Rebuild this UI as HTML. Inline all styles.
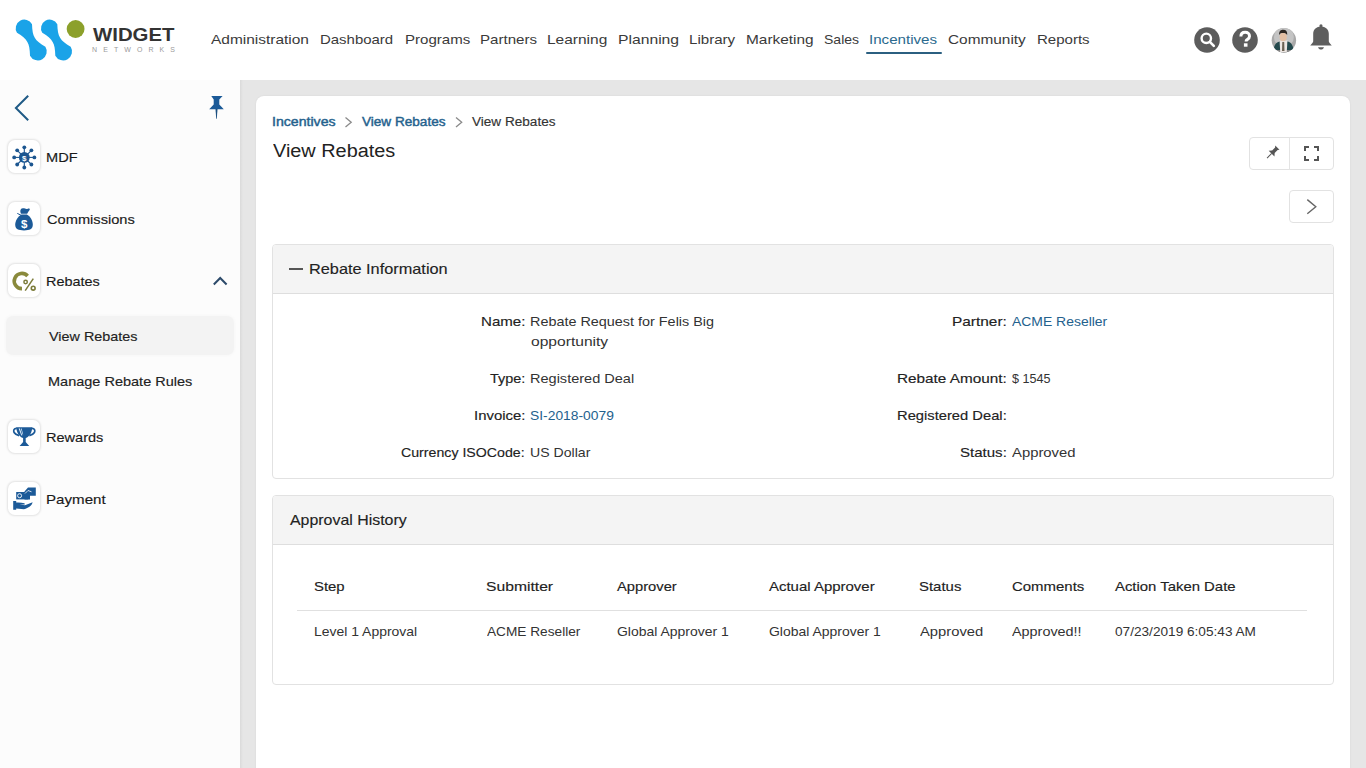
<!DOCTYPE html>
<html><head><meta charset="utf-8">
<style>
*{margin:0;padding:0;box-sizing:border-box}
html,body{width:1366px;height:768px;overflow:hidden;background:#e6e6e6;font-family:"Liberation Sans",sans-serif;color:#222}
.a{position:absolute}
.t{position:absolute;white-space:nowrap}
#hdr{position:absolute;left:0;top:0;width:1366px;height:80px;background:#fff}
#side{position:absolute;left:0;top:80px;width:240px;height:688px;background:#fcfcfc}
#card{position:absolute;left:256px;top:96px;width:1094px;height:700px;background:#fff;border-radius:8px;box-shadow:0 0 2px rgba(0,0,0,0.08)}
.panel{position:absolute;left:272px;width:1062px;border:1px solid #e2e2e2;border-radius:4px;background:#fff;overflow:hidden}
.ph{position:absolute;left:0;top:0;right:0;height:49px;background:#f4f4f4;border-bottom:1px solid #dedede}
.ibox{position:absolute;left:8px;width:32px;height:33px;background:#fff;border-radius:7px;box-shadow:0 0 2px 1px rgba(0,0,0,0.10)}
.btn{position:absolute;border:1px solid #e2e2e2;border-radius:4px;background:#fff}
</style></head><body>
<div id="hdr">
  <svg class="a" style="left:0;top:0" width="200" height="80" viewBox="0 0 200 80">
    <g fill="#1aa3e8">
      <path d="M32.02 24.13 C32.38 36.68 34.66 40.21 45.39 46.73 A8.90 8.90 0 1 1 30.01 55.67 C29.65 43.12 27.71 39.39 16.98 32.87 A8.70 8.70 0 1 1 32.02 24.13 Z"/>
      <path d="M57.32 24.13 C57.68 36.68 59.96 40.21 70.69 46.73 A8.90 8.90 0 1 1 55.31 55.67 C54.95 43.12 53.01 39.39 42.28 32.87 A8.70 8.70 0 1 1 57.32 24.13 Z"/>
    </g>
    <circle cx="75.6" cy="29" r="8.9" fill="#8ca02b"/>
    <text x="93" y="41.3" font-family="Liberation Sans" font-weight="bold" font-size="18" fill="#333" textLength="81.5" lengthAdjust="spacingAndGlyphs">WIDGET</text>
    <text x="92" y="52.2" font-family="Liberation Sans" font-size="7" fill="#9a9a9a" textLength="83" lengthAdjust="spacing">NETWORKS</text>
  </svg>

  <!-- header icons -->
  <svg class="a" style="left:1180px;top:10px" width="186" height="60" viewBox="1180 10 186 60">
    <circle cx="1207" cy="40" r="12.8" fill="#5c5c5c"/>
    <circle cx="1206.3" cy="38.3" r="4.7" fill="none" stroke="#fff" stroke-width="2.4"/>
    <line x1="1209.8" y1="41.8" x2="1213.8" y2="45.8" stroke="#fff" stroke-width="2.6" stroke-linecap="round"/>
    <circle cx="1245" cy="40" r="12.8" fill="#5c5c5c"/>
    <path d="M1240.9 36.6 C1240.9 33.8 1242.8 32.3 1245.2 32.3 C1247.7 32.3 1249.5 33.9 1249.5 36.2 C1249.5 38.3 1248 39 1246.9 39.8 C1246.2 40.3 1246.1 40.8 1246.1 41.6" fill="none" stroke="#fff" stroke-width="3"/>
    <rect x="1243.9" y="43.3" width="3.6" height="3.4" fill="#fff"/>
    <defs><clipPath id="av"><circle cx="1283.9" cy="40.3" r="12.2"/></clipPath></defs>
    <g clip-path="url(#av)">
      <rect x="1270" y="27" width="28" height="28" fill="#a9a9a9"/>
      <circle cx="1283.9" cy="37" r="10" fill="#c4c4c4"/>
      <rect x="1270" y="48.5" width="28" height="8" fill="#858585"/>
      <path d="M1273.5 50 C1274 45 1276 42.5 1279.5 41.5 L1288 41.5 C1291 42.5 1293 45 1293.5 50 Z" fill="#24494d"/>
      <path d="M1279.6 40.5 L1287.4 40.5 L1286.8 52 L1280.2 52 Z" fill="#ece6e2"/>
      <path d="M1282.3 42 L1284.2 42 L1284.5 51 L1282 51 Z" fill="#6a6052"/>
      <ellipse cx="1283.2" cy="37" rx="3.6" ry="4.3" fill="#e3bfa3"/>
      <path d="M1279.2 35 C1278.8 31 1281 29.8 1283.3 29.8 C1286 29.8 1287.6 31.5 1287.2 35 C1286.2 33 1284 32.6 1280.6 33.2 Z" fill="#2d2722"/>
    </g>
    <path d="M1313.2 41.5 L1313.2 33.8 C1313.2 29.2 1316.6 26.4 1321 26.4 C1325.4 26.4 1328.8 29.2 1328.8 33.8 L1328.8 41.5 C1329.4 43.3 1331 44.5 1331.8 45.6 L1310.2 45.6 C1311 44.5 1312.6 43.3 1313.2 41.5 Z" fill="#5e5e5e"/>
    <circle cx="1321" cy="25.9" r="1.6" fill="#5e5e5e"/>
    <path d="M1318 47.2 L1324 47.2 C1323.5 48.8 1322.3 49.6 1321 49.6 C1319.7 49.6 1318.5 48.8 1318 47.2 Z" fill="#5e5e5e"/>
  </svg>
  <div class="a" style="left:866px;top:52px;width:76px;height:2px;background:#2b5f80;border-radius:1px"></div>
</div>

<div id="side"></div>
<div class="a" style="left:240px;top:80px;width:3px;height:688px;background:linear-gradient(to right,rgba(0,0,0,0.05),rgba(0,0,0,0))"></div>
<div id="card"></div>

<div class="ibox" style="top:140px"></div>
<div class="ibox" style="top:202px"></div>
<div class="ibox" style="top:264px"></div>
<div class="ibox" style="top:420px"></div>
<div class="ibox" style="top:482px"></div>

<!-- sidebar icons -->
<svg class="a" style="left:0;top:80px" width="240" height="460" viewBox="0 80 240 460">
  <path d="M28.2 95.8 L15.9 108 L28.2 120.2" fill="none" stroke="#1f5a86" stroke-width="2"/>
  <path d="M211.3 96 L222.6 96 L219.3 99.5 L219.3 104.5 L223.8 109.2 L209.2 109.2 L213.7 104.5 L213.7 99.5 Z" fill="#1b5a98"/>
  <path d="M215.5 109 L217.5 109 L216.8 118.7 L216.2 118.7 Z" fill="#1b4f80"/>
  <path d="M213.8 284.5 L220.2 278 L226.6 284.5" fill="none" stroke="#2c4a6a" stroke-width="2"/>
  <!-- MDF -->
  <g fill="#1c5690" stroke="#1c5690">
    <g stroke-width="1.1">
      <line x1="24.3" y1="147.3" x2="24.3" y2="167.5"/><line x1="14.2" y1="157.4" x2="34.4" y2="157.4"/>
      <line x1="17.2" y1="150.3" x2="31.4" y2="164.5"/><line x1="31.4" y1="150.3" x2="17.2" y2="164.5"/>
    </g>
    <circle cx="24.3" cy="157.4" r="5.4" stroke="none"/>
    <circle cx="24.3" cy="147.3" r="1.9" stroke="none"/><circle cx="24.3" cy="167.5" r="1.9" stroke="none"/>
    <circle cx="14.2" cy="157.4" r="1.9" stroke="none"/><circle cx="34.4" cy="157.4" r="1.9" stroke="none"/>
    <circle cx="17.2" cy="150.3" r="1.9" stroke="none"/><circle cx="31.4" cy="164.5" r="1.9" stroke="none"/>
    <circle cx="31.4" cy="150.3" r="1.9" stroke="none"/><circle cx="17.2" cy="164.5" r="1.9" stroke="none"/>
  </g>
  <text x="24.3" y="160.6" font-family="Liberation Sans" font-weight="bold" font-size="8" fill="#fff" text-anchor="middle">$</text>
  <!-- money bag -->
  <path d="M21 213.8 C19.8 211.2 20.2 208.6 22.8 208.3 C24.8 208.1 25.8 209.4 27.8 208.7 C29.4 208.2 30.2 208.9 29.6 210 C28.6 211.6 27.6 212.6 27.2 213.8 Z" fill="#1c5a98"/>
  <path d="M21.6 214.6 L26.8 214.6 C30.4 216.6 32.8 220.8 32.8 224.8 C32.8 229.4 29.6 230.4 24 230.4 C18.4 230.4 15.2 229.4 15.2 224.8 C15.2 220.8 18 216.6 21.6 214.6 Z" fill="#1c5a98"/>
  <line x1="17.3" y1="213.4" x2="21.4" y2="215.4" stroke="#1c5a98" stroke-width="1"/>
  <text x="24.1" y="228.4" font-family="Liberation Sans" font-weight="bold" font-size="11.5" fill="#fff" text-anchor="middle">$</text>
  <!-- rebates -->
  <path d="M27.6 276 A7.6 7.6 0 1 0 22 288.6" fill="none" stroke="#8a8a3c" stroke-width="3.6"/>
  <circle cx="25.6" cy="282" r="1.7" fill="none" stroke="#7c7c3a" stroke-width="1.5"/>
  <circle cx="33.2" cy="288.2" r="1.9" fill="none" stroke="#7c7c3a" stroke-width="1.6"/>
  <line x1="33.3" y1="278.6" x2="25.2" y2="290.6" stroke="#7c7c3a" stroke-width="1.5"/>
  <!-- trophy -->
  <path d="M16.3 427.2 L32.2 427.2 C32.2 432 29.6 436.6 25.7 438 L25.7 442 L29.2 446 L19.6 446 L23.1 442 L23.1 438 C19.2 436.6 16.3 432 16.3 427.2 Z" fill="#1c5a98"/>
  <path d="M16.8 428.4 C13.8 428.2 13.2 430.8 14.1 432.5 C15.1 434.3 17.3 435.1 19.2 435.6 M31.7 428.4 C34.7 428.2 35.3 430.8 34.4 432.5 C33.4 434.3 31.2 435.1 29.3 435.6" fill="none" stroke="#1c5a98" stroke-width="1.7"/>
  <path d="M18.6 428.6 L19.9 428.6 L22.3 435.4 L21.3 435.6 Z M20.8 428.6 L21.6 428.6 L23.2 434.5 L22.6 434.6 Z" fill="#d8e8f6"/>
  <!-- payment -->
  <rect x="16.2" y="492" width="12" height="7.4" fill="#1c5a98"/>
  <circle cx="19.6" cy="495.7" r="2" fill="none" stroke="#fff" stroke-width="0.9"/>
  <path d="M24.5 491.5 L28 487.5 L35.8 487.5 L35.8 495.7 L30 495.7 L30 499.4 L24.5 499.4 Z" fill="#1c5a98"/>
  <path d="M25 493.5 L28 490.5 L31.5 491.8" fill="none" stroke="#fff" stroke-width="0.8"/>
  <path d="M13.2 501 L16.2 501 L16.2 502.5 C19 502.2 22 502.6 24.5 503.3 L24.8 504.6 L19.5 504.6 L25 505.3 L32.6 502.2 C32.2 505.2 28.5 508 24 509.2 L16.2 508.5 L16.2 509.8 L13.2 509.8 Z" fill="#1c5a98"/>
</svg>
<div class="a" style="left:6px;top:316px;width:228px;height:39px;background:#f3f3f3;border-radius:7px;box-shadow:0 0 3px 1px rgba(0,0,0,0.025)"></div>


<!-- breadcrumb chevrons -->
<svg class="a" style="left:340px;top:112px" width="130" height="20" viewBox="340 112 130 20">
  <path d="M345.5 117.6 L351.2 122.3 L345.5 127" fill="none" stroke="#8a8a8a" stroke-width="1.3"/>
  <path d="M456 117.6 L461.7 122.3 L456 127" fill="none" stroke="#8a8a8a" stroke-width="1.3"/>
</svg>
<!-- action buttons -->
<div class="btn" style="left:1249px;top:137px;width:85px;height:33px"></div>
<div class="a" style="left:1289px;top:137px;width:1px;height:33px;background:#e4e4e4"></div>
<div class="btn" style="left:1289px;top:190px;width:45px;height:33px"></div>
<svg class="a" style="left:1250px;top:138px" width="84" height="90" viewBox="1250 138 84 90">
  <g transform="rotate(45 1272.2 152.9)" fill="#555">
    <path d="M1269.2 145.6 L1275.2 145.6 L1274 147 L1274 151.2 L1276.3 153.8 L1268.1 153.8 L1270.4 151.2 L1270.4 147 Z"/>
    <rect x="1271.7" y="153.6" width="1" height="6.6"/>
  </g>
  <path d="M1305 151 L1305 147 L1309 147 M1314 147 L1318 147 L1318 151 M1318 156 L1318 160 L1314 160 M1309 160 L1305 160 L1305 156" fill="none" stroke="#555" stroke-width="2"/>
  <path d="M1307.3 199.6 L1315.8 206.7 L1307.3 213.8" fill="none" stroke="#666" stroke-width="1.4"/>
</svg>
<div class="panel" style="top:244px;height:235px"><div class="ph"></div></div>
<div class="a" style="left:289px;top:268px;width:14px;height:2px;background:#555"></div>
<div class="panel" style="top:495px;height:190px"><div class="ph"></div></div>
<div class="a" style="left:297px;top:610px;width:1010px;height:1px;background:#e0e0e0"></div>

<span class="t" id="t0" style="left:211.20px;top:29.50px;font-size:13px;line-height:20px;letter-spacing:0.000px;transform:scaleX(1.1890);transform-origin:0 0;color:#3a3a3a">Administration</span>
<span class="t" id="t1" style="left:320.00px;top:29.50px;font-size:13px;line-height:20px;letter-spacing:0.000px;transform:scaleX(1.1492);transform-origin:0 0;color:#3a3a3a">Dashboard</span>
<span class="t" id="t2" style="left:404.50px;top:29.50px;font-size:13px;line-height:20px;letter-spacing:0.000px;transform:scaleX(1.1574);transform-origin:0 0;color:#3a3a3a">Programs</span>
<span class="t" id="t3" style="left:480.30px;top:29.50px;font-size:13px;line-height:20px;letter-spacing:0.000px;transform:scaleX(1.1601);transform-origin:0 0;color:#3a3a3a">Partners</span>
<span class="t" id="t4" style="left:547.30px;top:29.50px;font-size:13px;line-height:20px;letter-spacing:0.000px;transform:scaleX(1.1910);transform-origin:0 0;color:#3a3a3a">Learning</span>
<span class="t" id="t5" style="left:617.60px;top:29.50px;font-size:13px;line-height:20px;letter-spacing:0.000px;transform:scaleX(1.2069);transform-origin:0 0;color:#3a3a3a">Planning</span>
<span class="t" id="t6" style="left:688.60px;top:29.50px;font-size:13px;line-height:20px;letter-spacing:0.000px;transform:scaleX(1.1608);transform-origin:0 0;color:#3a3a3a">Library</span>
<span class="t" id="t7" style="left:745.70px;top:29.50px;font-size:13px;line-height:20px;letter-spacing:0.000px;transform:scaleX(1.1847);transform-origin:0 0;color:#3a3a3a">Marketing</span>
<span class="t" id="t8" style="left:824.00px;top:29.50px;font-size:13px;line-height:20px;letter-spacing:0.000px;transform:scaleX(1.0779);transform-origin:0 0;color:#3a3a3a">Sales</span>
<span class="t" id="t9" style="left:869.20px;top:29.50px;font-size:13px;line-height:20px;letter-spacing:0.000px;transform:scaleX(1.1632);transform-origin:0 0;color:#2b6a8e">Incentives</span>
<span class="t" id="t10" style="left:948.20px;top:29.50px;font-size:13px;line-height:20px;letter-spacing:0.000px;transform:scaleX(1.1837);transform-origin:0 0;color:#3a3a3a">Community</span>
<span class="t" id="t11" style="left:1037.40px;top:29.50px;font-size:13px;line-height:20px;letter-spacing:0.000px;transform:scaleX(1.1551);transform-origin:0 0;color:#3a3a3a">Reports</span>
<span class="t" id="t12" style="left:271.70px;top:113.14px;font-size:12px;line-height:18px;letter-spacing:0.000px;transform:scaleX(1.1773);transform-origin:0 0;color:#24618d;-webkit-text-stroke:0.4px #24618d">Incentives</span>
<span class="t" id="t13" style="left:362.00px;top:113.14px;font-size:12px;line-height:18px;letter-spacing:0.000px;transform:scaleX(1.1312);transform-origin:0 0;color:#24618d;-webkit-text-stroke:0.4px #24618d">View Rebates</span>
<span class="t" id="t14" style="left:471.90px;top:113.14px;font-size:12px;line-height:18px;letter-spacing:0.000px;transform:scaleX(1.1311);transform-origin:0 0;color:#333;-webkit-text-stroke:0.14px #333">View Rebates</span>
<span class="t" id="t15" style="left:272.70px;top:137.66px;font-size:18px;line-height:27px;letter-spacing:0.000px;transform:scaleX(1.1043);transform-origin:0 0;color:#222">View Rebates</span>
<span class="t" id="t16" style="left:308.70px;top:257.70px;font-size:15px;line-height:22px;letter-spacing:0.000px;transform:scaleX(1.0867);transform-origin:0 0;color:#222;-webkit-text-stroke:0.14px #222">Rebate Information</span>
<span class="t" id="t17" style="left:289.70px;top:508.90px;font-size:15px;line-height:22px;letter-spacing:0.000px;transform:scaleX(1.0607);transform-origin:0 0;color:#222;-webkit-text-stroke:0.14px #222">Approval History</span>
<span class="t" id="t18" style="left:480.60px;top:311.50px;font-size:13px;line-height:20px;letter-spacing:0.000px;transform:scaleX(1.1590);transform-origin:0 0;color:#222;-webkit-text-stroke:0.14px #222">Name:</span>
<span class="t" id="t19" style="left:529.50px;top:311.50px;font-size:13px;line-height:20px;letter-spacing:0.000px;transform:scaleX(1.1073);transform-origin:0 0;color:#333">Rebate Request for Felis Big</span>
<span class="t" id="t20" style="left:530.50px;top:331.50px;font-size:13px;line-height:20px;letter-spacing:0.000px;transform:scaleX(1.1994);transform-origin:0 0;color:#333">opportunity</span>
<span class="t" id="t21" style="left:489.60px;top:368.90px;font-size:13px;line-height:20px;letter-spacing:0.000px;transform:scaleX(1.1113);transform-origin:0 0;color:#222;-webkit-text-stroke:0.14px #222">Type:</span>
<span class="t" id="t22" style="left:529.60px;top:368.90px;font-size:13px;line-height:20px;letter-spacing:0.000px;transform:scaleX(1.1173);transform-origin:0 0;color:#333">Registered Deal</span>
<span class="t" id="t23" style="left:473.60px;top:405.50px;font-size:13px;line-height:20px;letter-spacing:0.000px;transform:scaleX(1.1467);transform-origin:0 0;color:#222;-webkit-text-stroke:0.14px #222">Invoice:</span>
<span class="t" id="t24" style="left:529.60px;top:405.50px;font-size:13px;line-height:20px;letter-spacing:0.000px;transform:scaleX(1.0649);transform-origin:0 0;color:#24618d">SI-2018-0079</span>
<span class="t" id="t25" style="left:401.20px;top:442.80px;font-size:13px;line-height:20px;letter-spacing:0.000px;transform:scaleX(1.0902);transform-origin:0 0;color:#222;-webkit-text-stroke:0.14px #222">Currency ISOCode:</span>
<span class="t" id="t26" style="left:529.60px;top:442.80px;font-size:13px;line-height:20px;letter-spacing:0.000px;transform:scaleX(1.0850);transform-origin:0 0;color:#333">US Dollar</span>
<span class="t" id="t27" style="left:952.30px;top:311.50px;font-size:13px;line-height:20px;letter-spacing:0.000px;transform:scaleX(1.1847);transform-origin:0 0;color:#222;-webkit-text-stroke:0.14px #222">Partner:</span>
<span class="t" id="t28" style="left:1012.30px;top:311.50px;font-size:13px;line-height:20px;letter-spacing:0.000px;transform:scaleX(1.0717);transform-origin:0 0;color:#24618d">ACME Reseller</span>
<span class="t" id="t29" style="left:897.30px;top:368.90px;font-size:13px;line-height:20px;letter-spacing:0.000px;transform:scaleX(1.1768);transform-origin:0 0;color:#222;-webkit-text-stroke:0.14px #222">Rebate Amount:</span>
<span class="t" id="t30" style="left:1012.30px;top:368.90px;font-size:13px;line-height:20px;letter-spacing:0.000px;transform:scaleX(0.9692);transform-origin:0 0;color:#333">$ 1545</span>
<span class="t" id="t31" style="left:897.30px;top:405.50px;font-size:13px;line-height:20px;letter-spacing:0.000px;transform:scaleX(1.1332);transform-origin:0 0;color:#222;-webkit-text-stroke:0.14px #222">Registered Deal:</span>
<span class="t" id="t32" style="left:960.30px;top:442.80px;font-size:13px;line-height:20px;letter-spacing:0.000px;transform:scaleX(1.1566);transform-origin:0 0;color:#222;-webkit-text-stroke:0.14px #222">Status:</span>
<span class="t" id="t33" style="left:1012.30px;top:442.80px;font-size:13px;line-height:20px;letter-spacing:0.000px;transform:scaleX(1.1413);transform-origin:0 0;color:#333">Approved</span>
<span class="t" id="t34" style="left:314.20px;top:576.70px;font-size:13px;line-height:20px;letter-spacing:0.000px;transform:scaleX(1.1461);transform-origin:0 0;color:#222;-webkit-text-stroke:0.14px #222">Step</span>
<span class="t" id="t35" style="left:486.20px;top:576.70px;font-size:13px;line-height:20px;letter-spacing:0.000px;transform:scaleX(1.2058);transform-origin:0 0;color:#222;-webkit-text-stroke:0.14px #222">Submitter</span>
<span class="t" id="t36" style="left:616.70px;top:576.70px;font-size:13px;line-height:20px;letter-spacing:0.000px;transform:scaleX(1.1321);transform-origin:0 0;color:#222;-webkit-text-stroke:0.14px #222">Approver</span>
<span class="t" id="t37" style="left:768.60px;top:576.70px;font-size:13px;line-height:20px;letter-spacing:0.000px;transform:scaleX(1.1512);transform-origin:0 0;color:#222;-webkit-text-stroke:0.14px #222">Actual Approver</span>
<span class="t" id="t38" style="left:918.90px;top:576.70px;font-size:13px;line-height:20px;letter-spacing:0.000px;transform:scaleX(1.1494);transform-origin:0 0;color:#222;-webkit-text-stroke:0.14px #222">Status</span>
<span class="t" id="t39" style="left:1011.70px;top:576.70px;font-size:13px;line-height:20px;letter-spacing:0.000px;transform:scaleX(1.1507);transform-origin:0 0;color:#222;-webkit-text-stroke:0.14px #222">Comments</span>
<span class="t" id="t40" style="left:1115.40px;top:576.70px;font-size:13px;line-height:20px;letter-spacing:0.000px;transform:scaleX(1.1451);transform-origin:0 0;color:#222;-webkit-text-stroke:0.14px #222">Action Taken Date</span>
<span class="t" id="t41" style="left:314.20px;top:621.50px;font-size:13px;line-height:20px;letter-spacing:0.000px;transform:scaleX(1.0733);transform-origin:0 0;color:#333">Level 1 Approval</span>
<span class="t" id="t42" style="left:487.20px;top:621.50px;font-size:13px;line-height:20px;letter-spacing:0.000px;transform:scaleX(1.0505);transform-origin:0 0;color:#333">ACME Reseller</span>
<span class="t" id="t43" style="left:616.70px;top:621.50px;font-size:13px;line-height:20px;letter-spacing:0.000px;transform:scaleX(1.0736);transform-origin:0 0;color:#333">Global Approver 1</span>
<span class="t" id="t44" style="left:768.60px;top:621.50px;font-size:13px;line-height:20px;letter-spacing:0.000px;transform:scaleX(1.0736);transform-origin:0 0;color:#333">Global Approver 1</span>
<span class="t" id="t45" style="left:919.90px;top:621.50px;font-size:13px;line-height:20px;letter-spacing:0.000px;transform:scaleX(1.1359);transform-origin:0 0;color:#333">Approved</span>
<span class="t" id="t46" style="left:1011.70px;top:621.50px;font-size:13px;line-height:20px;letter-spacing:0.000px;transform:scaleX(1.1064);transform-origin:0 0;color:#333">Approved!!</span>
<span class="t" id="t47" style="left:1115.40px;top:621.50px;font-size:13px;line-height:20px;letter-spacing:0.000px;transform:scaleX(1.0483);transform-origin:0 0;color:#333">07/23/2019 6:05:43 AM</span>
<span class="t" id="t48" style="left:45.90px;top:148.10px;font-size:13px;line-height:20px;letter-spacing:0.000px;transform:scaleX(1.1212);transform-origin:0 0;color:#1a1a1a;-webkit-text-stroke:0.14px #1a1a1a">MDF</span>
<span class="t" id="t49" style="left:46.60px;top:210.10px;font-size:13px;line-height:20px;letter-spacing:0.000px;transform:scaleX(1.1254);transform-origin:0 0;color:#1a1a1a;-webkit-text-stroke:0.14px #1a1a1a">Commissions</span>
<span class="t" id="t50" style="left:45.60px;top:272.20px;font-size:13px;line-height:20px;letter-spacing:0.000px;transform:scaleX(1.1103);transform-origin:0 0;color:#1a1a1a;-webkit-text-stroke:0.14px #1a1a1a">Rebates</span>
<span class="t" id="t51" style="left:48.50px;top:326.70px;font-size:13px;line-height:20px;letter-spacing:0.000px;transform:scaleX(1.1057);transform-origin:0 0;color:#222;-webkit-text-stroke:0.14px #222">View Rebates</span>
<span class="t" id="t52" style="left:47.50px;top:372.40px;font-size:13px;line-height:20px;letter-spacing:0.000px;transform:scaleX(1.1155);transform-origin:0 0;color:#222;-webkit-text-stroke:0.14px #222">Manage Rebate Rules</span>
<span class="t" id="t53" style="left:45.80px;top:428.20px;font-size:13px;line-height:20px;letter-spacing:0.000px;transform:scaleX(1.1179);transform-origin:0 0;color:#1a1a1a;-webkit-text-stroke:0.14px #1a1a1a">Rewards</span>
<span class="t" id="t54" style="left:45.80px;top:490.20px;font-size:13px;line-height:20px;letter-spacing:0.000px;transform:scaleX(1.1624);transform-origin:0 0;color:#1a1a1a;-webkit-text-stroke:0.14px #1a1a1a">Payment</span>
</body></html>
